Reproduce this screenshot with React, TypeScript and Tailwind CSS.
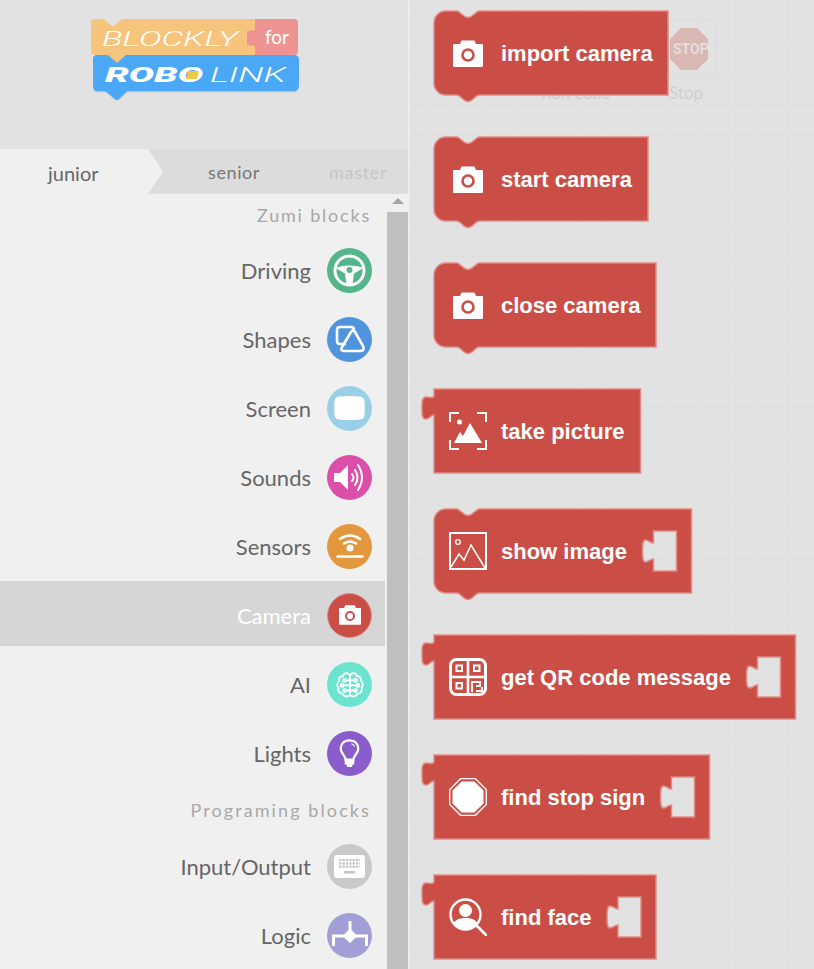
import React from 'react';

const RED = '#cb4e46';

function blockPath(w: number, h: number, notch: boolean, socket: boolean) {
    let d = '';
    if (notch) {
        d = `M0 12A12 12 0 0 1 12 0H23C27 1 29 6.500 34 6.500C39 6.500 41 1 45 0H${w}V${h}H45C41 ${h} 39 ${h + 6.5} 34 ${h + 6.5}C29 ${h + 6.5} 27 ${h} 23 ${h}H12A12 12 0 0 1 0 ${h - 12}Z`;
    } else {
        d = `M0 0H${w}V${h}H0V26C-3 26 -5 30 -8 30C-12 30 -12 25 -12 19C-12 13 -12 8 -8 8C-5 8 -2 10 0 7Z`;
    }
    if (socket) {
        const x = w - 38;
        d += `M${x} 22H${x + 23}V62H${x}V50C${x - 3} 50 ${x - 5} 53 ${x - 8} 53C${x - 11} 53 ${x - 11} 47 ${x - 11} 42C${x - 11} 36 ${x - 11} 31 ${x - 8} 31C${x - 5} 31 ${x - 3} 34 ${x} 34Z`;
    }
    return d;
}

function CameraGlyph({ size, hole }: { size: number; hole: string }) {
    return (
        <svg width={size} height={size * 0.9} viewBox="0 0 30 27">
            <path d="M1 4H7L8.500 .5H21.500L23 4H29Q30 4 30 5V26Q30 27 29 27H1Q0 27 0 26V5Q0 4 1 4Z" fill="#fff" />
            <circle cx="15" cy="15" r="5.500" fill="#fff" stroke={hole} strokeWidth="2.600" />
        </svg>
    );
}

function TakePictureIcon() {
    return (
        <svg width="38" height="38" viewBox="0 0 38 38" fill="none" stroke="#fff" strokeWidth="2">
            <path d="M1 10V1H10M28 1H37V10M1 28V37H10M28 37H37V28" />
            <circle cx="10.500" cy="10" r="2.500" fill="#fff" stroke="none" />
            <path d="M5 31L11 20L14 24L21 11L33 31Z" fill="#fff" stroke="none" />
        </svg>
    );
}

function ShowImageIcon() {
    return (
        <svg width="38" height="38" viewBox="0 0 38 38" fill="none" stroke="#fff">
            <rect x="1" y="1" width="36" height="36" strokeWidth="2" />
            <circle cx="9" cy="10" r="2.300" strokeWidth="1.300" />
            <path d="M2 35L10 22L15 28L22 13L36 36" strokeWidth="1.500" />
        </svg>
    );
}

function QrIcon() {
    return (
        <svg width="38" height="38" viewBox="0 0 38 38" fill="none" stroke="#fff">
            <rect x="1.500" y="1.500" width="35" height="35" rx="6" strokeWidth="3" />
            <path d="M19 1V37M1 19H37" strokeWidth="2.600" />
            <rect x="7.500" y="7.500" width="5.500" height="5.500" strokeWidth="2" />
            <rect x="25" y="7.500" width="5.500" height="5.500" strokeWidth="2" />
            <rect x="7.500" y="25" width="5.500" height="5.500" strokeWidth="2" />
            <path d="M23 34V24H31V28H27M27 33H33V29" strokeWidth="1.800" />
        </svg>
    );
}

function StopIcon() {
    return (
        <svg width="38" height="38" viewBox="0 0 38 38">
            <path d="M11.500 .7H26.500L37.300 11.500V26.500L26.500 37.300H11.500L.7 26.500V11.500Z" fill="none" stroke="#fff" strokeWidth="1.300" />
            <path d="M12.600 3.500H25.400L34.500 12.600V25.400L25.400 34.500H12.600L3.500 25.400V12.600Z" fill="#fff" />
        </svg>
    );
}

function FaceIcon() {
    return (
        <svg width="38" height="38" viewBox="0 0 38 38" fill="none" stroke="#fff">
            <circle cx="16.500" cy="16.500" r="15" strokeWidth="2.400" />
            <path d="M27 27L37 37" strokeWidth="2.800" strokeLinecap="round" />
            <circle cx="16.500" cy="12.500" r="6.500" fill="#fff" stroke="none" />
            <path d="M4.500 25C8 20.500 12 20 16.500 20C21 20 25 20.500 28.500 25C25 29.500 21 31 16.500 31C12 31 8 29.500 4.500 25Z" fill="#fff" stroke="none" />
        </svg>
    );
}

function BrainHalf() {
    return (
        <g>
            <path d="M16 4.500C13 1 9 2 8.500 5.500C5 5.500 3.500 8 4.500 10.500C2 12 1.500 16 3.500 18C2.500 21 4.500 24.500 8 24.500C9 27.500 13.500 28.500 16 26V4.500Z" />
            <path d="M16 10H11.500M16 15.500H9M16 21H11.500" />
            <circle cx="10" cy="10" r="1.500" />
            <circle cx="7.500" cy="15.500" r="1.500" />
            <circle cx="10" cy="21" r="1.500" />
        </g>
    );
}

const cameraIcon = <div className="flex w-[38px] justify-center"><CameraGlyph size={30} hole={RED} /></div>;

const blocks = [
    { title: 'import camera', w: 234, notch: true, socket: false, icon: cameraIcon, gap: 'mt-[11px]' },
    { title: 'start camera', w: 214, notch: true, socket: false, icon: cameraIcon, gap: 'mt-[42px]' },
    { title: 'close camera', w: 222, notch: true, socket: false, icon: cameraIcon, gap: 'mt-[42px]' },
    { title: 'take picture', w: 206.5, notch: false, socket: false, icon: <TakePictureIcon />, gap: 'mt-[42px]' },
    { title: 'show image', w: 257.5, notch: true, socket: true, icon: <ShowImageIcon />, gap: 'mt-[36px]' },
    { title: 'get QR code message', w: 361.5, notch: false, socket: true, icon: <QrIcon />, gap: 'mt-[42px]' },
    { title: 'find stop sign', w: 275.5, notch: false, socket: true, icon: <StopIcon />, gap: 'mt-[36px]' },
    { title: 'find face', w: 222, notch: false, socket: true, icon: <FaceIcon />, gap: 'mt-[36px]' },
];

function Block({ item }: { item: (typeof blocks)[number] }) {
    return (
        <div className={`relative h-[84px] ${item.gap}`} style={{ width: item.w }}>
            <svg className="absolute left-0 top-0 overflow-visible" width={item.w} height={84}>
                <path
                    d={blockPath(item.w, 84, item.notch, item.socket)}
                    fill={RED}
                    fillRule="evenodd"
                    stroke="#e08a85"
                    strokeWidth="1.500"
                />
            </svg>
            <div className="relative flex h-full items-center pl-[15.500px]">
                {item.icon}
                <span className="ml-[14px] whitespace-nowrap pt-[2px] font-['Liberation_Sans',sans-serif] text-[22px] font-bold leading-none text-white">
                    {item.title}
                </span>
            </div>
        </div>
    );
}

function IconCircle({ color, children, small }: { color: string; children: React.ReactNode; small?: boolean }) {
    return (
        <div
            className={small
                ? 'flex h-[45px] w-[45px] items-center justify-center rounded-full border border-[#d9928e]'
                : 'flex h-[45px] w-[45px] items-center justify-center rounded-full'}
            style={{ background: color }}
        >
            {children}
        </div>
    );
}

const menu = [
    {
        label: 'Driving', color: '#55b58a',
        icon: (
            <svg width="33" height="33" viewBox="0 0 33 33" fill="none" stroke="#fff">
                <circle cx="16.500" cy="16.500" r="14.500" strokeWidth="3" />
                <path d="M2.500 14C9 10.500 24 10.500 30.500 14L21 19.500L19.500 30H13.500L12 19.500Z" fill="#fff" stroke="none" />
                <circle cx="16.500" cy="16" r="3" fill="#55b58a" stroke="none" />
            </svg>
        ),
    },
    {
        label: 'Shapes', color: '#4f94dd',
        icon: (
            <svg width="30" height="30" viewBox="0 0 30 30" fill="none" stroke="#fff" strokeWidth="2.600" strokeLinejoin="round">
                <path d="M11 20H5Q2 20 2 17V6Q2 3 5 3H16Q19 3 19 6V8" />
                <path d="M16 8Q18 5 20 8L28 22Q30 27 25 27H9Q5 27 7 23Z" />
            </svg>
        ),
    },
    {
        label: 'Screen', color: '#99d0e8',
        icon: (
            <svg width="31" height="24" viewBox="0 0 31 24">
                <path d="M5 .5Q15.500 -.5 26 .5Q30 1 30.500 5Q31 12 30.500 19Q30 23 26 23.500Q15.500 24.500 5 23.500Q1 23 .5 19Q0 12 .5 5Q1 1 5 .5Z" fill="#fff" />
            </svg>
        ),
    },
    {
        label: 'Sounds', color: '#db4fa8',
        icon: (
            <svg width="33" height="33" viewBox="0 0 33 33" fill="none" stroke="#fff" strokeWidth="2" strokeLinecap="round">
                <path d="M1 12H7L15 4V29L7 21H1Z" fill="#fff" stroke="none" />
                <path d="M19 13Q22 16.500 19 20M22 9Q27 16.500 22 24M25 4Q33 16.500 25 29" />
            </svg>
        ),
    },
    {
        label: 'Sensors', color: '#e3983f',
        icon: (
            <svg width="28" height="26" viewBox="0 0 28 26" fill="none" stroke="#fff" strokeWidth="2.400" strokeLinecap="round">
                <path d="M4 6Q14 -1 24 6M8 10.500Q14 6.500 20 10.500" />
                <circle cx="14" cy="15" r="3.500" fill="#fff" stroke="none" />
                <path d="M1.500 23.500H26.500" />
            </svg>
        ),
    },
    {
        label: 'Camera', color: RED, active: true,
        icon: <CameraGlyph size={22} hole={RED} />,
    },
    {
        label: 'AI', color: '#6ce3cf',
        icon: (
            <svg width="30" height="27" viewBox="0 0 32 29" fill="none" stroke="#fff" strokeWidth="2">
                <BrainHalf />
                <g transform="matrix(-1 0 0 1 32 0)">
                    <BrainHalf />
                </g>
            </svg>
        ),
    },
    {
        label: 'Lights', color: '#8b5ccb',
        icon: (
            <svg width="21" height="28" viewBox="0 0 24 32" fill="none" stroke="#fff">
                <path d="M12 1.500C5.500 1.500 2 6 2 11C2 15 4.500 17 6 19.500C7 21 7.500 22 7.500 23.500H16.500C16.500 22 17 21 18 19.500C19.500 17 22 15 22 11C22 6 18.500 1.500 12 1.500Z" strokeWidth="2.600" />
                <path d="M6.500 23H17.500V28.500L15 30V32H9V30L6.500 28.500Z" fill="#fff" stroke="none" />
                <path d="M14 5.500Q17 6 18 9" strokeWidth="1.200" />
            </svg>
        ),
    },
    { section: 'Programing blocks' },
    {
        label: 'Input/Output', color: '#c9c9c9',
        icon: (
            <svg width="31" height="23" viewBox="0 0 31 23">
                <rect width="31" height="23" rx="3" fill="#fff" />
                <path d="M5 5H26M5 8.300H26M5 11.600H26" stroke="#c4c4c4" strokeWidth="2.200" strokeDasharray="2.400 1" />
                <rect x="10" y="16" width="11" height="2.500" fill="#c4c4c4" />
            </svg>
        ),
    },
    {
        label: 'Logic', color: '#a19fd6',
        icon: (
            <svg width="36" height="28" viewBox="0 0 36 28">
                <path d="M16.500 0H19.500V9L24 13.500H36V25H33V16.500H24L18 22L12 16.500H3V25H0V13.500H12L16.500 9Z" fill="#fff" />
            </svg>
        ),
    },
];

function Logo() {
    return (
        <svg width="216" height="90" viewBox="0 0 216 90">
            <path d="M8 50H208Q213 50 213 54V76Q213 81 208 81H42L34 89Q32 91 30 89L22 81H13Q8 81 8 76Z" fill="#000" opacity=".12" transform="translate(0 1.500)" />
            <path d="M12 45H209Q214 45 214 50V76Q214 81 209 81H42L34 89Q32 91 30 89L20 81H13Q8 81 8 76V49Q8 45 12 45Z" fill="#4aa8f6" />
            <path d="M10 9H19L28 17L37 9H172V45H41L32 53L23 45H10Q6 45 6 41V13Q6 9 10 9Z" fill="#f6c47c" />
            <path d="M170 9H209Q213 9 213 13V41Q213 45 209 45H170V36C167 36 165 35 162 35V21C165 21 167 20 170 20Z" fill="#ed9493" />
            <text x="17" y="36" fontFamily="Roboto, sans-serif" fontStyle="italic" fontWeight="300" fontSize="21" fill="#fff" textLength="136" lengthAdjust="spacingAndGlyphs">BLOCKLY</text>
            <text x="180" y="34" fontFamily="Lato, sans-serif" fontSize="19" fill="#fff">for</text>
            <text x="20" y="71.500" fontFamily="Roboto, sans-serif" fontStyle="italic" fontWeight="900" fontSize="21" fill="#fff" textLength="98" lengthAdjust="spacingAndGlyphs">ROBO</text>
            <path d="M103 61H114L112 69H101Z" fill="#f5c93f" />
            <text x="125" y="71.500" fontFamily="Roboto, sans-serif" fontStyle="italic" fontWeight="300" fontSize="21" fill="#fff" textLength="76" lengthAdjust="spacingAndGlyphs">LINK</text>
        </svg>
    );
}

export default function App() {
    return (
        <div className="flex h-screen w-full overflow-hidden bg-[#e2e2e2] font-['Lato',sans-serif]">
            <aside className="flex h-full w-[408px] shrink-0 flex-col">
                <div className="h-[149px] pl-[85px] pt-[10px]">
                    <Logo />
                </div>
                <div className="relative flex h-[45px] items-center bg-[#dcdcdc]">
                    <div className="flex h-full w-[163px] items-center bg-[#f0f0f0] pl-[48px] pt-[3px] text-[20px] text-[#666] [clip-path:polygon(0_0,148px_0,163px_50%,148px_100%,0_100%)]">
                        junior
                    </div>
                    <span className="ml-[45px] pt-[2px] text-[18px] tracking-[0.6px] text-[#777]">senior</span>
                    <span className="ml-[69px] pt-[2px] text-[18px] tracking-[0.7px] text-[#c6c6c6]">master</span>
                </div>
                <div className="flex min-h-0 flex-1 bg-[#f0f0f0]">
                    <div className="w-[387px]">
                        <div className="flex h-[41.500px] items-center justify-end pr-[16px] pt-[2px] text-[18px] tracking-[1.800px] text-[#a8a8a8]">
                            Zumi blocks
                        </div>
                        {menu.map((item) =>
                            item.section ? (
                                <div key={item.section} className="flex h-[44px] items-center justify-end pr-[16px] pt-[2px] text-[18px] tracking-[2.100px] text-[#a8a8a8]">
                                    {item.section}
                                </div>
                            ) : (
                                <div key={item.label} className="relative flex h-[69px] items-center justify-end pr-[15px]">
                                    {item.active && <div className="absolute left-0 top-0 h-[65px] w-[385px] bg-[#d6d6d6]" />}
                                    <span className={item.active ? 'relative mr-[16px] text-[22px] text-white' : 'relative mr-[16px] text-[22px] text-[#666]'}>
                                        {item.label}
                                    </span>
                                    <div className="relative">
                                        <IconCircle color={item.color!} small={item.active}>{item.icon}</IconCircle>
                                    </div>
                                </div>
                            )
                        )}
                    </div>
                    <div className="flex w-[21px] flex-col items-center">
                        <div className="mt-[4px] h-0 w-0 border-x-[6px] border-b-[6px] border-x-transparent border-b-[#a6a6a6]" />
                        <div className="mt-[8px] w-full flex-1 bg-[#bfbfbf]" />
                    </div>
                </div>
            </aside>
            <main className="relative min-w-0 flex-1 border-l-2 border-[#ececec] bg-[#e2e2e2] bg-[linear-gradient(#dfdfdf_1px,transparent_1px),linear-gradient(90deg,#dfdfdf_1px,transparent_1px)] bg-[size:30.300px_30.300px] bg-[position:15px_13.500px]">
                {/* toolbar behind the flyout */}
                <div className="absolute left-[131px] top-[80px] text-[17px] text-[#cfcfcf]">Run code</div>
                <div className="absolute left-[258px] top-[19px] flex h-[60px] w-[48px] items-center rounded-md border border-[#dcdcdc]">
                    <svg width="38" height="42" viewBox="0 0 38 42" className="ml-[1px]">
                        <path d="M11 0H27L38 11V31L27 42H11L0 31V11Z" fill="#d9b7b3" />
                    </svg>
                    <span className="absolute left-[4px] top-[20px] font-['Roboto',sans-serif] text-[14px] font-bold leading-[18px] text-[#e8dcdb]">STOP</span>
                </div>
                <div className="absolute left-[259px] top-[80px] text-[17px] text-[#cfcfcf]">Stop</div>

                <div className="relative flex flex-col pl-[23.500px]">
                    {blocks.map((item) => (
                        <Block key={item.title} item={item} />
                    ))}
                </div>
            </main>
        </div>
    );
}
